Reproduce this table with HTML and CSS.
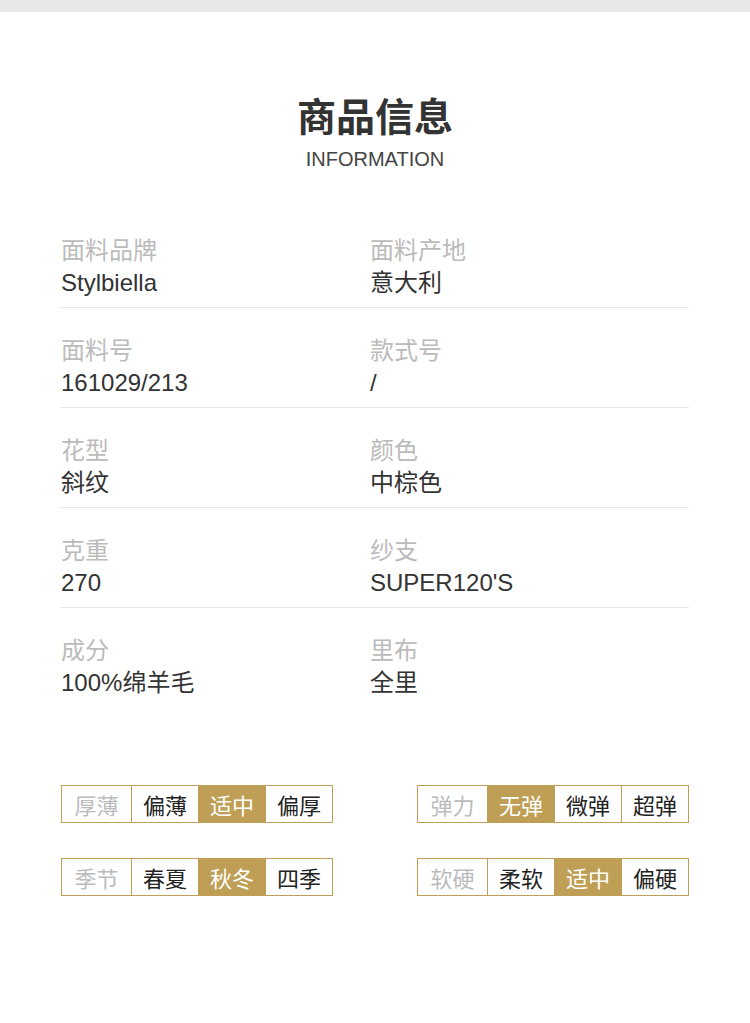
FILE: index.html
```html
<!DOCTYPE html>
<html lang="zh">
<head>
<meta charset="utf-8">
<link rel="stylesheet" href="styles.css">
</head>
<body>
<div class="topbar"></div>
<header class="head">
  <h1 class="title">商品信息</h1>
  <div class="subtitle">INFORMATION</div>
</header>
<section class="specs">
  <div class="row">
    <div class="cell"><div class="label">面料品牌</div><div class="value">Stylbiella</div></div>
    <div class="cell"><div class="label">面料产地</div><div class="value">意大利</div></div>
  </div>
  <div class="row">
    <div class="cell"><div class="label">面料号</div><div class="value">161029/213</div></div>
    <div class="cell"><div class="label">款式号</div><div class="value">/</div></div>
  </div>
  <div class="row">
    <div class="cell"><div class="label">花型</div><div class="value">斜纹</div></div>
    <div class="cell"><div class="label">颜色</div><div class="value">中棕色</div></div>
  </div>
  <div class="row">
    <div class="cell"><div class="label">克重</div><div class="value">270</div></div>
    <div class="cell"><div class="label">纱支</div><div class="value">SUPER120'S</div></div>
  </div>
  <div class="row last">
    <div class="cell"><div class="label">成分</div><div class="value">100%绵羊毛</div></div>
    <div class="cell"><div class="label">里布</div><div class="value">全里</div></div>
  </div>
</section>
<section class="tags">
  <div class="tagrow">
    <div class="tagbox"><span class="t key">厚薄</span><span class="t">偏薄</span><span class="t on">适中</span><span class="t">偏厚</span></div>
    <div class="tagbox"><span class="t key">弹力</span><span class="t on">无弹</span><span class="t">微弹</span><span class="t">超弹</span></div>
  </div>
  <div class="tagrow">
    <div class="tagbox"><span class="t key">季节</span><span class="t">春夏</span><span class="t on">秋冬</span><span class="t">四季</span></div>
    <div class="tagbox"><span class="t key">软硬</span><span class="t">柔软</span><span class="t on">适中</span><span class="t">偏硬</span></div>
  </div>
</section>
</body>
</html>
```
FILE: styles.css
```css
* { box-sizing: border-box; }
html, body { margin: 0; padding: 0; background: #fff; }
body {
  font-family: "Liberation Sans", "Noto Sans CJK SC", sans-serif;
  color: #333;
  width: 750px;
}
.topbar { height: 12px; background: #e8e8e8; }
.head { text-align: center; padding-top: 78px; }
.title {
  margin: 0;
  font-family: "Noto Sans CJK SC", sans-serif;
  font-size: 39px;
  line-height: 48px;
  font-weight: 700;
  color: #333;
}
.subtitle {
  margin-top: 9px;
  font-family: "Liberation Sans", sans-serif;
  font-size: 20px;
  line-height: 24px;
  color: #444;
}
.specs { margin: 64px 61px 0; }
.row {
  display: grid;
  grid-template-columns: 309px 1fr;
  padding: 0 0 8px;
  border-bottom: 1px solid #e6e6e6;
  margin-bottom: 27px;
}
.row.last { border-bottom: none; }
.label { font-size: 24px; line-height: 32px; color: #bbb; }
.value { font-size: 24px; line-height: 32px; color: #333; }
.tags { margin: 78px 61px 0; display: flex; flex-direction: column; gap: 35px; }
.tagrow { display: flex; justify-content: space-between; }
.tagbox {
  display: flex;
  border: 1px solid #bf9f55;
  height: 38px;
}
.t {
  width: 67px;
  display: flex;
  align-items: center;
  justify-content: center;
  font-family: "Noto Sans CJK SC", sans-serif;
  font-size: 22px;
  color: #222;
  border-left: 1px solid #bf9f55;
}
.t.key { width: 69px; border-left: none; color: #bbb; }
.t.on { background: #bf9f55; color: #fff; }
```
